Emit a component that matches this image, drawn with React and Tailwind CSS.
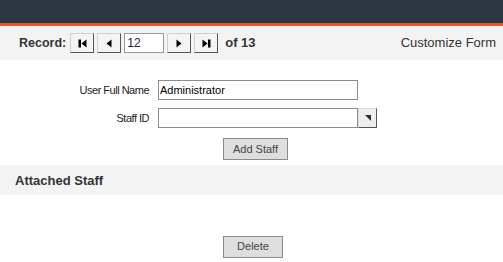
import React from "react";

const NavButton = ({ children }) => (
    <button className="w-[24px] h-[20px] flex items-center justify-center bg-[#f4f4f4] border border-t-[#d0d0d0] border-l-[#d0d0d0] border-r-[#555] border-b-[#555]">
        {children}
    </button>
);

const First = () => (
    <svg width="9" height="9" viewBox="0 0 9 9"><rect x="0.5" y="0.5" width="2.5" height="8" fill="#000" /><path d="M8.5 0.5 L3.5 4.5 L8.5 8.5 Z" fill="#000" /></svg>
);
const Prev = () => (
    <svg width="6" height="9" viewBox="0 0 6 9"><path d="M5.5 0.5 L0.5 4.5 L5.5 8.5 Z" fill="#000" /></svg>
);
const Next = () => (
    <svg width="6" height="9" viewBox="0 0 6 9"><path d="M0.5 0.5 L5.5 4.5 L0.5 8.5 Z" fill="#000" /></svg>
);
const Last = () => (
    <svg width="9" height="9" viewBox="0 0 9 9"><path d="M0.5 0.5 L5.5 4.5 L0.5 8.5 Z" fill="#000" /><rect x="6" y="0.5" width="2.5" height="8" fill="#000" /></svg>
);

export default function App() {
    return (
        <div className="w-[503px] h-[262px] bg-white font-['Liberation_Sans',Arial,sans-serif] overflow-hidden">
            <div className="h-[23px] bg-[#2c3542]" />
            <div className="h-[3px] bg-[#e8562a]" />

            <div className="h-[34px] bg-[#f3f3f3] flex items-center pl-[19px] pr-[7px]">
                <span className="text-[12.5px] font-bold text-[#333] mr-[4px]">Record:</span>
                <div className="flex items-center gap-[3px]">
                    <NavButton><First /></NavButton>
                    <NavButton><Prev /></NavButton>
                    <input
                        defaultValue="12"
                        className="w-[40px] h-[20px] bg-white border border-[#999] px-[2px] text-[12px] text-[#1a1a5a] outline-none"
                    />
                    <NavButton><Next /></NavButton>
                    <NavButton><Last /></NavButton>
                </div>
                <span className="text-[13px] font-bold text-[#333] ml-[7px]">of 13</span>
                <span className="ml-auto text-[13px] text-[#333]">Customize Form</span>
            </div>

            <div className="pt-[20px] flex flex-col">
                <div className="flex items-center h-[20px]">
                    <label className="w-[150px] text-right pr-[1px] text-[11px] tracking-[-0.5px] text-[#222]">User Full Name</label>
                    <input
                        defaultValue="Administrator"
                        className="ml-[8px] w-[200px] h-[20px] bg-white border border-[#8c8c8c] px-[1px] text-[11px] text-black outline-none"
                    />
                </div>
                <div className="flex items-center h-[20px] mt-[8px]">
                    <label className="w-[150px] text-right pr-[1px] text-[11px] tracking-[-0.5px] text-[#222]">Staff ID</label>
                    <input className="ml-[8px] w-[200px] h-[20px] bg-white border border-[#8c8c8c] outline-none" />
                    <button className="w-[19px] h-[20px] bg-[#eeeeee] border border-t-[#ddd] border-l-[#ddd] border-r-[#555] border-b-[#555] flex items-center justify-center">
                        <svg width="6" height="6" viewBox="0 0 6 6"><path d="M0 0 L6 0 L6 6 Z" fill="#1f3333" /></svg>
                    </button>
                </div>
                <div className="pl-[223px] mt-[8px]">
                    <button className="w-[65px] h-[22px] bg-[#dedede] border border-[#8a8a8a] text-[11px] text-[#444]">Add Staff</button>
                </div>
            </div>

            <div className="mt-[5px] h-[30px] bg-[#f3f3f3] flex items-center pl-[15px]">
                <span className="text-[13px] font-bold text-[#333]">Attached Staff</span>
            </div>

            <div className="pl-[223px] pt-[38px]">
                <button className="w-[60px] h-[22px] bg-[#dedede] border border-[#8a8a8a] text-[11px] text-[#444]">Delete</button>
            </div>
        </div>
    );
}
